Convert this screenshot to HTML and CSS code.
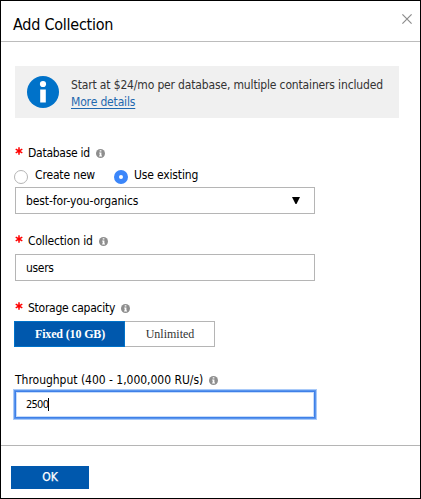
FILE: index.html
```html
<!DOCTYPE html>
<html lang="en">
<head>
<meta charset="utf-8">
<title>Add Collection</title>
<link rel="stylesheet" href="styles.css">
</head>
<body>
<svg width="0" height="0" class="defs">
  <symbol id="info" viewBox="0 0 9 9"><circle cx="4.5" cy="4.5" r="4.5" fill="#8e8e8e"/><path d="M3.7 1.3h1.7v1.3H3.7zM3.2 3.6h2.2v3h.6v.9H3.1v-.9h.6V4.5h-.5z" fill="#fff"/></symbol>
  <symbol id="star" viewBox="0 0 8 8"><path d="M4 .3v7.4M.7 2.1l6.6 3.8M7.3 2.1L.7 5.9" stroke="#f00" stroke-width="1.5" fill="none"/></symbol>
</svg>
<div class="panel">
  <header class="header">
    <h1 class="title">Add Collection</h1>
    <svg class="close" viewBox="0 0 10 10"><path d="M.4.4l9.2 9.2M9.6.4L.4 9.6" stroke="#8c8c8c" stroke-width="1.2"/></svg>
  </header>
  <main class="content">
    <section class="notice">
      <svg class="notice-icon" viewBox="0 0 32 32"><circle cx="16" cy="16" r="16" fill="#0072c9"/><circle cx="16" cy="8" r="3.1" fill="#fff"/><path d="M13.2 13.5h5.6v13h-5.6z" fill="#fff"/></svg>
      <div class="notice-text"><div>Start at $24/mo per database, multiple containers included</div><a class="link">More details</a></div>
    </section>
    <section class="field database">
      <div class="label"><svg class="star"><use href="#star"/></svg><span class="label-text">Database id</span><svg class="info"><use href="#info"/></svg></div>
      <div class="radios">
        <i class="radio"></i><span class="radio-text first">Create new</span>
        <i class="radio on"></i><span class="radio-text">Use existing</span>
      </div>
      <div class="box"><span class="selection">best-for-you-organics</span><svg class="arrow" viewBox="0 0 8 7"><path d="M0 0h8L4.5 7h-1z"/></svg></div>
    </section>
    <section class="field collection">
      <div class="label"><svg class="star"><use href="#star"/></svg><span>Collection id</span><svg class="info"><use href="#info"/></svg></div>
      <div class="box"><span class="users">users</span></div>
    </section>
    <section class="field storage">
      <div class="label"><svg class="star"><use href="#star"/></svg><span class="label-text">Storage capacity</span><svg class="info"><use href="#info"/></svg></div>
      <div class="toggle"><div class="option selected">Fixed (10 GB)</div><div class="option">Unlimited</div></div>
    </section>
    <section class="field throughput">
      <div class="label"><span class="range">Throughput (400 - 1,000,000 RU/s)</span><svg class="info"><use href="#info"/></svg></div>
      <div class="box focused"><span class="number">2500</span><i class="caret"></i></div>
    </section>
  </main>
  <footer class="footer"><div class="ok">OK</div></footer>
</div>
</body>
</html>
```
FILE: styles.css
```css
* { box-sizing: border-box; }
body { margin: 0; background: #fff; color: #000; font: 12px/16px "DejaVu Sans Condensed", "DejaVu Sans", sans-serif; font-stretch: condensed; white-space: nowrap; letter-spacing: -.155px; }
svg { display: block; flex: none; }
.defs { position: absolute; }
.panel { width: 421px; height: 499px; border: 1px solid #000; display: flex; flex-direction: column; }
.header { height: 41px; flex: none; border-bottom: 1px solid #bcbcbc; display: flex; justify-content: space-between; padding: 13px 8px 0 12px; }
.title { margin: 1px 0 0; font-size: 16px; line-height: 20px; font-weight: normal; letter-spacing: -.25px; }
.close { width: 10px; height: 10px; }
.content { height: 403px; flex: none; padding: 24px 0 0 14px; }
.notice { width: 384px; height: 52px; background: #f0f0f0; color: #333; display: flex; padding: 10px 0 0 12px; }
.notice-icon { width: 32px; height: 32px; margin-right: 12px; }
.notice-text { line-height: 17px; padding-top: 1px; }
.link { color: #1f68ae; text-decoration: underline; text-underline-offset: 2px; }
.field { width: 300px; }
.label { height: 16px; display: flex; align-items: center; }
.label-text { letter-spacing: -.26px; }
.selection { letter-spacing: -.11px; }
.users { letter-spacing: -.3px; }
.number { letter-spacing: -.75px; }
.range { letter-spacing: -.02px; }
.star { width: 8px; height: 8px; margin: 0 5px 4px 0; }
.info { width: 9px; height: 9px; margin-left: 6px; }
.database { margin-top: 27px; }
.radios { height: 26px; display: flex; padding-top: 6px; }
.radio { width: 14px; height: 14px; border: 1px solid #b5b5b5; border-radius: 50%; margin: 3px 7px 0 -1px; flex: none; }
.radio.on { border: 5px solid #3b86fa; background: #fff; margin-left: 0; margin-right: 6px; }
.first { width: 79px; }
.box { height: 27px; border: 1px solid #b5b5b5; display: flex; align-items: center; padding: 0 14px 0 10px; }
.arrow { width: 8px; height: 7px; margin-left: auto; }
.collection { margin-top: 19px; }
.collection .label { height: 21px; padding-bottom: 5px; }
.storage { margin-top: 19px; }
.storage .label { height: 21px; padding-bottom: 5px; }
.toggle { width: 201px; height: 26px; margin-left: -1px; display: flex; font: 12px/24px "Liberation Serif", serif; letter-spacing: 0; text-align: center; }
.option { width: 90px; border: 1px solid #b5b5b5; border-left: 0; color: #333; padding-left: 1px; }
.selected { width: 111px; background: #0058ad; border: 1px solid #0072c9; color: #fff; font-weight: bold; letter-spacing: -.15px; }
.throughput { margin-top: 25px; }
.throughput .label { height: 19px; padding-bottom: 3px; }
.focused { border: 1px solid #3f80e8; box-shadow: 0 0 0 1px #5b96ed, 0 0 0 2px #a9caf9, inset 0 0 0 1px #c6dcfa; font-size: 11px; }
.caret { width: 1px; height: 13px; background: #000; }
.footer { border-top: 1px solid #b5b5b5; flex: 1; padding: 20px 0 0 10px; }
.ok { width: 78px; height: 23px; background: #0058ad; color: #fff; text-align: center; line-height: 23px; -webkit-text-stroke: .25px #fff; }
```
